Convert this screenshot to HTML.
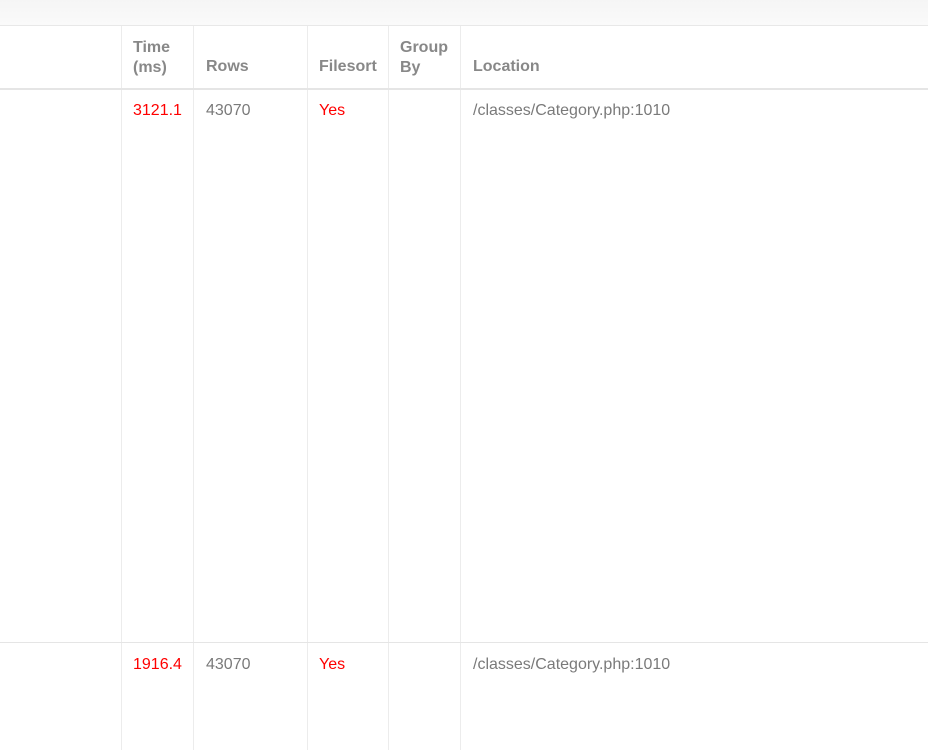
<!DOCTYPE html><html><head><style>
body{margin:0;width:928px;height:750px;overflow:hidden;background:#fff;font-family:"Liberation Sans",sans-serif;font-size:16px;color:#7a7a7a}
.top{position:absolute;left:0;top:0;width:928px;height:25px;background:linear-gradient(#f5f5f5,#fafafa);border-bottom:1px solid #e8e8e8}
.v{position:absolute;top:26px;bottom:0;width:1px;background:#ececec}
.h{position:absolute;left:0;width:928px;height:1px;background:#e5e5e5}
.t{position:absolute;line-height:20px}
.b{font-weight:bold;color:#888}
.r{color:#f00}
</style></head><body>
<div class="top"></div>
<div class="v" style="left:121px"></div><div class="v" style="left:193px"></div><div class="v" style="left:307px"></div><div class="v" style="left:388px"></div><div class="v" style="left:460px"></div>
<div class="h" style="top:88px;height:2px"></div>
<div class="h" style="top:642px"></div>
<div class="t b" style="left:133px;top:38px">Time<br>(ms)</div>
<div class="t b" style="left:206px;top:57px">Rows</div>
<div class="t b" style="left:319px;top:57px">Filesort</div>
<div class="t b" style="left:400px;top:38px">Group<br>By</div>
<div class="t b" style="left:473px;top:57px">Location</div>
<div class="t r" style="left:133px;top:101px">3121.1</div>
<div class="t" style="left:206px;top:101px">43070</div>
<div class="t r" style="left:319px;top:101px">Yes</div>
<div class="t" style="left:473px;top:101px">/classes/Category.php:1010</div>
<div class="t r" style="left:133px;top:655px">1916.4</div>
<div class="t" style="left:206px;top:655px">43070</div>
<div class="t r" style="left:319px;top:655px">Yes</div>
<div class="t" style="left:473px;top:655px">/classes/Category.php:1010</div>
</body></html>
